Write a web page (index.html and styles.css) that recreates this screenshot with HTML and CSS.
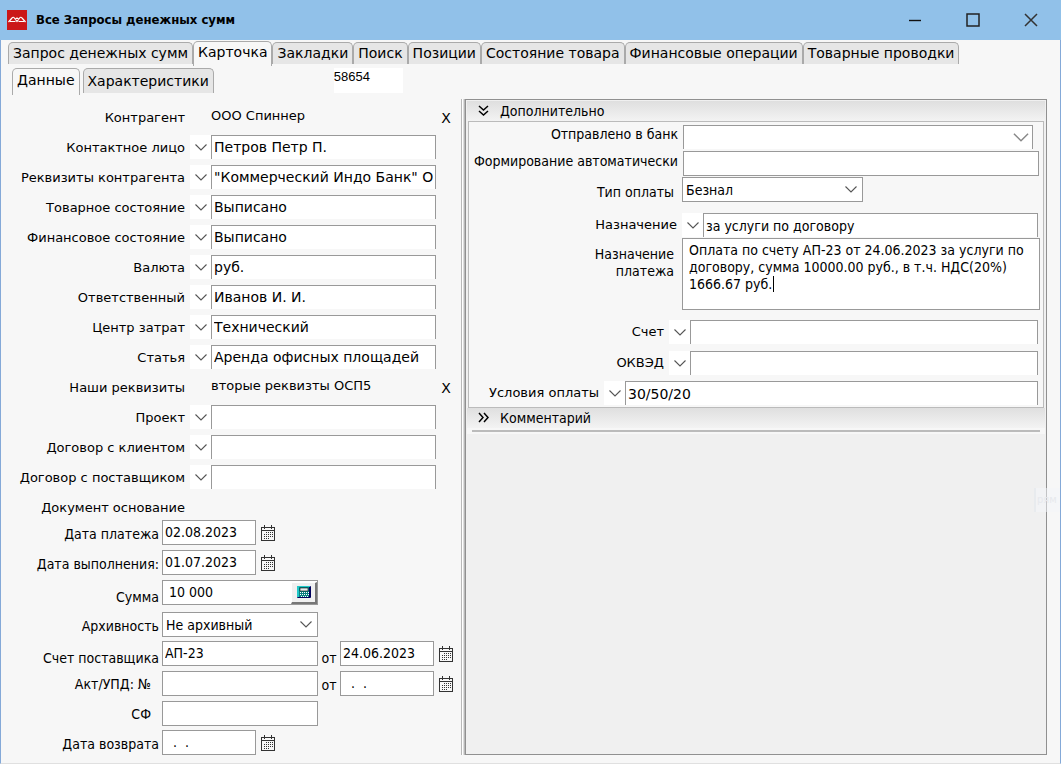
FILE: index.html
```html
<!DOCTYPE html>
<html lang="ru">
<head>
<meta charset="utf-8">
<title>Все Запросы денежных сумм</title>
<link rel="stylesheet" href="styles.css">
</head>
<body>
<svg class="defs" aria-hidden="true">
  <symbol id="chev" viewBox="0 0 12 7"><path d="M.5 .5 6 6 11.5 .5" fill="none" stroke="currentColor" stroke-width="1.1"/></symbol>
  <symbol id="cal" viewBox="0 0 14 16">
    <g shape-rendering="crispEdges"><path d="M.5 2.500h13v13H.5zM.5 5.500h13M3.500 0v4M10.500 0v4" fill="none" stroke="#333"/>
    <path d="M5 7.500h7M3 9.500h9M3 11.500h9M3 13.500h6" fill="none" stroke="#333" stroke-dasharray="1 1"/></g>
  </symbol>
</svg>
<header class="titlebar">
  <svg class="logo" viewBox="0 0 20 20" aria-hidden="true"><rect width="20" height="20" fill="#cb1719"/><path d="M1.500 12 5 8Q6.200 6.500 7.400 8L10 11.500 12.600 8Q13.800 6.500 15 8L18.500 12M3 11.500H8.500M11.500 11.500H17M8 9.500 10 8 12 9.500" fill="none" stroke="#fff" stroke-width="1.200"/></svg>
  <h1>Все Запросы денежных сумм</h1>
  <div class="winbtns">
    <button aria-label="Свернуть"><svg width="14" height="14"><path d="M1 7.500h12" stroke="#111" stroke-width="1.400"/></svg></button>
    <button aria-label="Развернуть"><svg width="14" height="14"><rect x="1" y="1" width="12" height="12" fill="none" stroke="#222" stroke-width="1.500"/></svg></button>
    <button aria-label="Закрыть"><svg width="14" height="14"><path d="M1 1 13 13M13 1 1 13" stroke="#333" stroke-width="1.500"/></svg></button>
  </div>
</header>
<main class="window">
  <nav class="tabs">
    <button>Запрос денежных сумм</button><button class="active">Карточка</button><button>Закладки</button><button>Поиск</button><button>Позиции</button><button>Состояние товара</button><button>Финансовые операции</button><button>Товарные проводки</button>
  </nav>
  <div class="subbar">
    <nav class="tabs sub"><button class="active">Данные</button><button>Характеристики</button></nav>
    <input class="code" aria-label="Номер" value="58654">
  </div>
  <div class="panes">
    <form class="left">
      <div class="links">
        <div class="row"><span class="lbl">Контрагент</span><output class="val">ООО Спиннер</output><button type="button" class="clear">X</button></div>
        <div class="row"><label for="f1">Контактное лицо</label><button type="button" class="drop" aria-label="Выбрать"><svg><use href="#chev"/></svg></button><input id="f1" value="Петров Петр П."></div>
        <div class="row"><label for="f2">Реквизиты контрагента</label><button type="button" class="drop" aria-label="Выбрать"><svg><use href="#chev"/></svg></button><input id="f2" value="&quot;Коммерческий Индо Банк&quot; ООО"></div>
        <div class="row"><label for="f3">Товарное состояние</label><button type="button" class="drop" aria-label="Выбрать"><svg><use href="#chev"/></svg></button><input id="f3" value="Выписано"></div>
        <div class="row"><label for="f4">Финансовое состояние</label><button type="button" class="drop" aria-label="Выбрать"><svg><use href="#chev"/></svg></button><input id="f4" value="Выписано"></div>
        <div class="row"><label for="f5">Валюта</label><button type="button" class="drop" aria-label="Выбрать"><svg><use href="#chev"/></svg></button><input id="f5" value="руб."></div>
        <div class="row"><label for="f6">Ответственный</label><button type="button" class="drop" aria-label="Выбрать"><svg><use href="#chev"/></svg></button><input id="f6" value="Иванов И. И."></div>
        <div class="row"><label for="f7">Центр затрат</label><button type="button" class="drop" aria-label="Выбрать"><svg><use href="#chev"/></svg></button><input id="f7" value="Технический"></div>
        <div class="row"><label for="f8">Статья</label><button type="button" class="drop" aria-label="Выбрать"><svg><use href="#chev"/></svg></button><input id="f8" value="Аренда офисных площадей"></div>
        <div class="row"><span class="lbl">Наши реквизиты</span><output class="val">вторые реквизты ОСП5</output><button type="button" class="clear">X</button></div>
        <div class="row"><label for="f10">Проект</label><button type="button" class="drop" aria-label="Выбрать"><svg><use href="#chev"/></svg></button><input id="f10"></div>
        <div class="row"><label for="f11">Договор с клиентом</label><button type="button" class="drop" aria-label="Выбрать"><svg><use href="#chev"/></svg></button><input id="f11"></div>
        <div class="row"><label for="f12">Договор с поставщиком</label><button type="button" class="drop" aria-label="Выбрать"><svg><use href="#chev"/></svg></button><input id="f12"></div>
        <div class="row"><span class="lbl">Документ основание</span></div>
      </div>
      <div class="docs">
        <div class="drow"><label for="d1">Дата платежа</label><input id="d1" class="date" value="02.08.2023"><button type="button" class="cal" aria-label="Календарь"><svg><use href="#cal"/></svg></button></div>
        <div class="drow"><label for="d2">Дата выполнения:</label><input id="d2" class="date" value="01.07.2023"><button type="button" class="cal" aria-label="Календарь"><svg><use href="#cal"/></svg></button></div>
        <div class="drow low"><label for="d3">Сумма</label><div class="sum"><input id="d3" value="10 000"><button type="button" aria-label="Калькулятор"><svg width="14" height="12"><rect width="14" height="12" rx="1" fill="#00005c"/><path d="M0 0h13v1H2v10H0z" fill="#20c8c8"/><path d="M2 1h10v10H2z" fill="#078080"/><path d="M3 2h8v3H3z" fill="#e8ecec" stroke="#111" stroke-width=".6"/><path d="M3 6.500h9M3 8.500h9M4 10.500h7" stroke="#fff" stroke-dasharray="1 1"/></svg></button></div></div>
        <div class="drow archive"><label for="d4">Архивность</label><div class="sel"><select id="d4"><option>Не архивный</option></select><svg><use href="#chev"/></svg></div></div>
        <div class="drow low"><label for="d5">Счет поставщика</label><input id="d5" class="num" value="АП-23"><label class="from" for="d6">от</label><input id="d6" class="date" value="24.06.2023"><button type="button" class="cal" aria-label="Календарь"><svg><use href="#cal"/></svg></button></div>
        <div class="drow short"><label for="d7">Акт/УПД: №</label><input id="d7" class="num"><label class="from" for="d8">от</label><input id="d8" class="date" value="  .  ."><button type="button" class="cal" aria-label="Календарь"><svg><use href="#cal"/></svg></button></div>
        <div class="drow short"><label for="d9">СФ</label><input id="d9" class="num"></div>
        <div class="drow back"><label for="d10">Дата возврата</label><input id="d10" class="date" value="  .  ."><button type="button" class="cal" aria-label="Календарь"><svg><use href="#cal"/></svg></button></div>
      </div>
    </form>
    <div class="splitter"></div>
    <section class="right">
      <button class="sect"><svg width="12" height="12"><path d="M1 1 5.500 5 10 1M1 6 5.500 10 10 6" fill="none" stroke="#000" stroke-width="1.500"/></svg>Дополнительно</button>
      <form class="extra">
        <div class="xrow bank"><label for="r1">Отправлено в банк</label><div class="sel"><select id="r1"><option></option></select><svg class="big"><use href="#chev"/></svg></div></div>
        <div class="xrow auto"><label for="r2">Формирование автоматически</label><input id="r2"></div>
        <div class="xrow type"><label for="r3">Тип оплаты</label><div class="sel"><select id="r3"><option>Безнал</option></select><svg><use href="#chev"/></svg></div></div>
        <div class="xrow purpose open"><label for="r4">Назначение</label><button type="button" class="drop" aria-label="Выбрать"><svg><use href="#chev"/></svg></button><input id="r4" value="за услуги по договору"></div>
        <div class="xrow memo"><label for="r5">Назначение платежа</label><div class="area"><textarea id="r5">Оплата по счету АП-23 от 24.06.2023 за услуги по договору, сумма 10000.00 руб., в т.ч. НДС(20%) 1666.67 руб.</textarea><i class="caret"></i></div></div>
        <div class="xrow acct open"><label for="r6">Счет</label><button type="button" class="drop" aria-label="Выбрать"><svg><use href="#chev"/></svg></button><input id="r6"></div>
        <div class="xrow acct open"><label for="r7">ОКВЭД</label><button type="button" class="drop" aria-label="Выбрать"><svg><use href="#chev"/></svg></button><input id="r7"></div>
        <div class="xrow terms open"><label for="r8">Условия оплаты</label><button type="button" class="drop" aria-label="Выбрать"><svg><use href="#chev"/></svg></button><input id="r8" value="30/50/20"></div>
      </form>
      <button class="sect"><svg width="12" height="12"><path d="M1 1 5 5.500 1 10M6 1 10 5.500 6 10" fill="none" stroke="#000" stroke-width="1.500"/></svg>Комментарий</button>
      <div class="rule"></div>
    </section>
  </div>
  <div class="ghost" aria-hidden="true">рям</div>
</main>
</body>
</html>
```
FILE: styles.css
```css
* { box-sizing: border-box; }

:root {
  --wide: "DejaVu Sans", sans-serif;
  --narrow: "DejaVu Sans Condensed", "Noto Sans", sans-serif;
  --line: #999;
  --bg: #f7f7f7;
}

body {
  margin: 0;
  min-height: 100vh;
  display: flex;
  flex-direction: column;
  background: var(--bg);
  color: #000;
  font: 14px/18px var(--narrow);
}

.defs { position: absolute; width: 0; height: 0; }

button, input, select, textarea {
  margin: 0;
  padding: 0;
  border: 0;
  border-radius: 0;
  background: none;
  color: inherit;
  font: inherit;
  outline: 0;
}

svg { display: block; }

.titlebar {
  display: flex;
  align-items: center;
  gap: 9px;
  height: 40px;
  padding-left: 7px;
  background: #91c1e9;
}
.logo { width: 20px; height: 20px; }
.titlebar h1 { margin: 0; font-size: 13px; font-weight: bold; }
.winbtns { display: flex; margin-left: auto; padding-right: 1px; }
.winbtns button { display: grid; place-items: center; width: 58px; height: 40px; }

.window {
  position: relative;
  flex: 1;
  display: flex;
  flex-direction: column;
  overflow: hidden;
  padding-bottom: 8px;
  border: solid #84a9d8;
  border-width: 0 1px;
  border-bottom: 1px solid #e0e0e0;
}

.tabs {
  display: flex;
  align-items: flex-start;
  height: 28px;
  padding: 1px 0 0 7px;
  font: 14px/20px var(--wide);
}
.tabs button {
  flex: none;
  height: 22px;
  margin-top: 1px;
  padding: 0 4px 2px;
  border: 1px solid #aaa;
  border-bottom: 0;
  border-radius: 5px 5px 0 0;
  background: #e6e6e6;
  white-space: nowrap;
}
.tabs .active { height: 25px; margin-top: 0; padding-bottom: 4px; background: var(--bg); }

.subbar { display: flex; }
.tabs.sub { gap: 3px; height: 27px; padding: 0 0 0 11px; }
.tabs.sub button { height: 25px; margin-top: 0; padding-bottom: 0; line-height: 23px; }
.tabs.sub .active { height: 27px; padding-bottom: 3px; }
.code {
  width: 69px;
  height: 25px;
  margin-left: 120px;
  padding-bottom: 8px;
  background: #fff;
  font: 13px/16px "Liberation Sans", sans-serif;
}

.panes { flex: 1; display: flex; margin-top: 4px; }

.left { flex: 0 0 460px; padding-top: 6px; }
.links { display: grid; gap: 6px; }
.row { display: flex; align-items: center; height: 24px; font: 14px/20px var(--wide); }
.row label, .lbl { width: 184px; padding-top: 2px; font-size: 13px; text-align: right; white-space: nowrap; }
.drop { display: grid; place-items: center; flex: none; width: 21px; height: 24px; background: #fff; }
.row .drop { margin-left: 5px; }
.drop svg, .sel svg { width: 12px; height: 7px; color: #555; }
.row input {
  width: 225px;
  height: 24px;
  padding: 0 2px 2px;
  border: 1px solid var(--line);
  border-bottom: 0;
  background: #fff;
}
.val { width: 230px; margin-left: 26px; padding-bottom: 3px; font-size: 13px; white-space: nowrap; }
.clear { width: 10px; padding-top: 2px; }

.docs { display: grid; gap: 5px; padding-top: 1px; }
.drow { display: flex; align-items: center; height: 25px; }
.drow > label:first-child { width: 158px; margin-right: 3px; padding-top: 3px; text-align: right; white-space: nowrap; }
.drow.low > label { padding-top: 9px; }
.drow.short > label:first-child { padding: 0 8px 0 0; }
.archive { margin: 2px 0 -1px; }
.back { margin-top: -1px; }
.drow input {
  height: 25px;
  padding: 0 2px 2px;
  border: 1px solid var(--line);
  background: #fff;
  white-space: pre;
}
.drow .date { width: 94px; }
.drow .num { width: 156px; }
.from { width: 22px; padding: 3px 0 0; text-align: center; }
.cal { margin-left: 5px; }
.cal svg { width: 14px; height: 16px; }
.sum { display: flex; align-items: center; width: 156px; height: 25px; border: 1px solid var(--line); background: #fff; }
.drow .sum input { flex: 1; min-width: 0; height: 23px; padding-left: 6px; border: 0; }
.sum button {
  display: grid;
  place-items: center;
  width: 26px;
  height: 22px;
  border: solid;
  border-width: 1px 2px 2px 1px;
  border-color: #fff #777 #777 #fff;
  background: #f0f0f0;
}

.sel { display: grid; align-items: center; width: 156px; height: 25px; border: 1px solid var(--line); background: #fff; }
.sel select { grid-area: 1 / 1; height: 23px; padding: 0 3px; appearance: none; }
.sel svg { grid-area: 1 / 1; justify-self: end; margin-right: 5px; pointer-events: none; }
.sel .big { width: 16px; height: 9px; margin-right: 3px; color: #888; }

.splitter { flex: 0 0 4px; border: solid #b8b8b8; border-width: 0 1px; background: linear-gradient(90deg, #fff 50%, #ddd 50%); }

.right {
  flex: 1;
  display: flex;
  flex-direction: column;
  min-width: 0;
  margin-right: 13px;
  padding: 1px;
  border: 1px solid #909090;
  background: #f0f0f0;
}
.sect {
  display: flex;
  align-items: center;
  gap: 10px;
  flex: none;
  height: 20px;
  padding-left: 11px;
  background: linear-gradient(#dfdfdf, #f3f3f3);
}
.extra {
  margin: 0 1px;
  padding: 3px 3px 2px 0;
  border: 1px solid #bbb;
  background: var(--bg);
}
.rule {
  height: 6px;
  border: solid var(--bg);
  border-width: 2px 5px;
  background: #bbb;
}

.xrow { display: flex; align-items: center; }
.xrow label { flex: none; width: 209px; text-align: right; white-space: nowrap; }
.xrow > input, .xrow .sel, .area { flex: 1; min-width: 0; }
.xrow > input, .xrow textarea { border: 1px solid var(--line); background: #fff; }
.bank label, .auto label { margin-right: 5px; padding-bottom: 6px; }
.bank .sel { height: 24px; margin-right: 7px; border-bottom: 0; }
.auto { margin: 2px 1px 0 0; }
.auto input { height: 25px; }
.type label { width: 205px; margin-right: 8px; padding-top: 5px; }
.xrow.type .sel { flex: 0 0 181px; }
.type { margin-top: 1px; }
.open { padding-right: 2px; }
.open label { font: 13px/18px var(--wide); margin-right: 5px; width: 208px; }
.xrow.open input { height: 24px; padding: 0 2px; border-bottom: 0; }
.open.purpose { margin-top: 11px; }
.memo { align-items: flex-start; margin-top: 1px; }
.memo label { width: 80px; margin: 8px 8px 0 125px; line-height: 17px; white-space: normal; }
.area { position: relative; }
.memo textarea { display: block; width: 100%; height: 72px; padding: 3px 6px; line-height: 17px; resize: none; }
.caret { position: absolute; left: 91px; top: 38px; width: 1px; height: 16px; background: #000; }
.acct { margin-top: 7px; }
.memo + .acct { margin-top: 10px; }
.acct label { width: 195px; }
.terms { margin-top: 6px; }
.terms label { width: 130px; }
.terms input { font: 14px/20px var(--wide); }

.ghost {
  position: absolute;
  top: 448px;
  right: 0;
  width: 26px;
  height: 24px;
  padding-left: 1px;
  border-left: 2px solid #e8ebee;
  background: rgb(244 246 250 / 50%);
  color: #e7e9ed;
  font-size: 11px;
  line-height: 24px;
  pointer-events: none;
}
```
